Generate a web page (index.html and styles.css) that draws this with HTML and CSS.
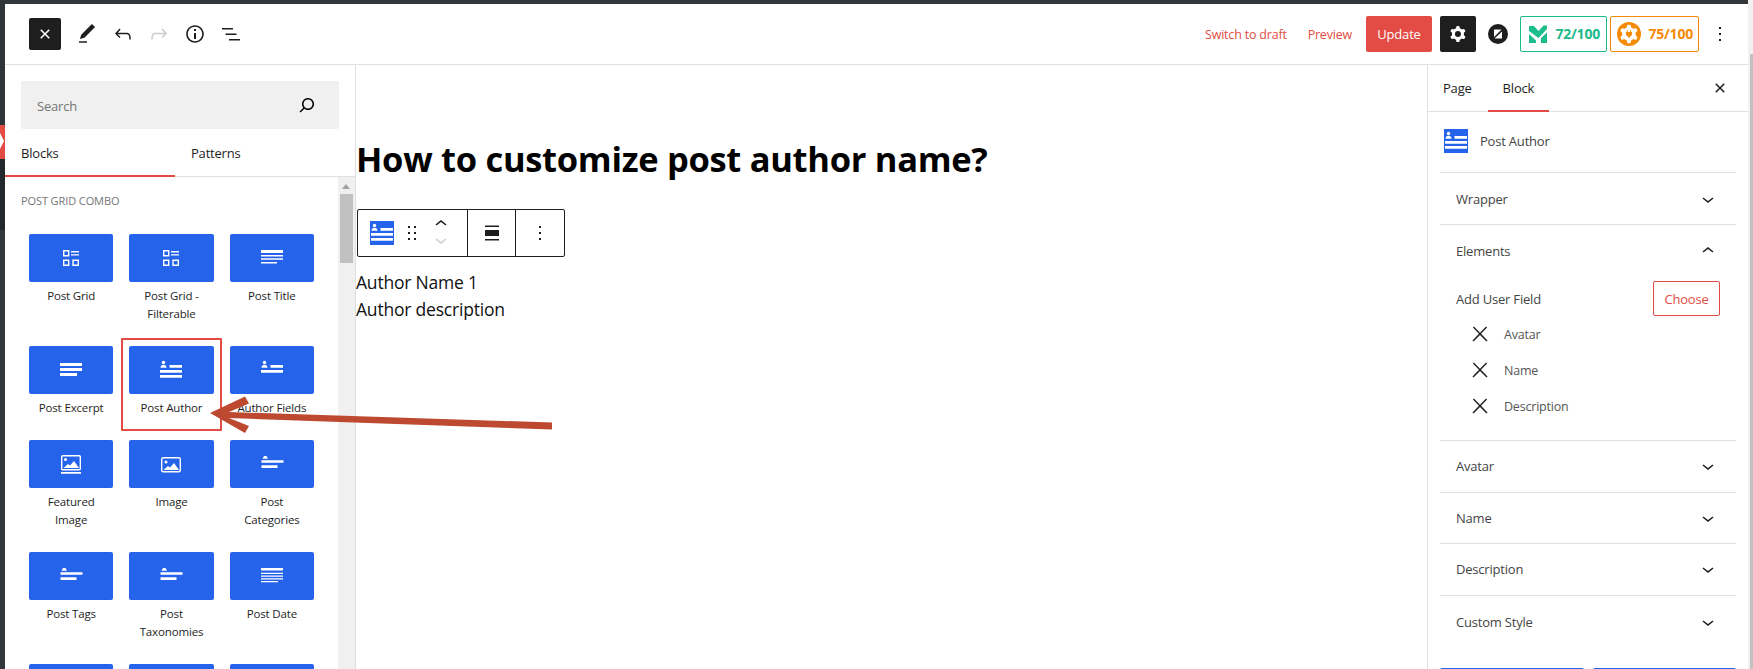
FILE: index.html
```html
<!DOCTYPE html>
<html lang="en">
<head>
    <meta charset="UTF-8">
    <title>How to customize post author name?</title>
    <link rel="stylesheet" href="styles.css">
</head>
<body>

    <svg class="defs" width="0" height="0">
        <symbol id="i-grid" viewBox="0 0 24 24">
            <path fill="none" stroke="#fff" stroke-width="1.4" d="M4.7 4.7h5v5h-5zM4.7 14.3h5v5h-5zM14 14.3h5.3v5H14z"/>
            <path fill="#fff" d="M12 5h8v1.4h-8zM12 8.2h8v1.4h-8z"/>
        </symbol>
        <symbol id="i-title" viewBox="0 0 24 24">
            <path fill="#fff" d="M1 4h22v3H1zM1 9h22v1.5H1zM1 12.3h22v1.5H1zM1 16h16v1.5H1z"/>
        </symbol>
        <symbol id="i-excerpt" viewBox="0 0 24 24">
            <path fill="#fff" d="M1 5h22v3H1zM1 10h22v3H1zM1 15h17v3H1z"/>
        </symbol>
        <symbol id="i-author" viewBox="0 0 24 24">
            <circle cx="4.5" cy="4.5" r="1.7" fill="#fff"/>
            <path fill="#fff" d="M1.5 9.7c0-2 1.2-3 3-3s3 1 3 3zM10.500 7H23v2.700H10.500zM1 12h22v2.700H1zM1 17h22v2.700H1z"/>
        </symbol>
        <symbol id="i-fields" viewBox="0 0 24 24">
            <circle cx="4.5" cy="4.5" r="1.7" fill="#fff"/>
            <path fill="#fff" d="M1.5 9.7c0-2 1.2-3 3-3s3 1 3 3zM10.500 7H23v2.700H10.500zM1 12h22v2.700H1z"/>
        </symbol>
        <symbol id="i-featured" viewBox="0 0 24 24">
            <rect x="2.7" y="3.7" width="18.6" height="14" rx="1" fill="none" stroke="#fff" stroke-width="1.4"/>
            <circle cx="6.5" cy="7.5" r="1.5" fill="#fff"/>
            <path fill="#fff" d="M4.500 16l4.500-4 2 1.400 4-4.400 5 7zM2 20h20v1.700H2z"/>
        </symbol>
        <symbol id="i-image" viewBox="0 0 24 24">
            <rect x="2.7" y="5.7" width="18.6" height="14" rx="1.500" fill="none" stroke="#fff" stroke-width="1.4"/>
            <circle cx="7" cy="10" r="1.5" fill="#fff"/>
            <path fill="#fff" d="M4.500 18l4.500-4 2 1.400 4-4.400 5 7z"/>
        </symbol>
        <symbol id="i-terms" viewBox="0 0 24 24">
            <path fill="#fff" d="M2.500 6.700L4 4h2.500L8 6.700zM1.500 8.300h22v2.400h-22zM1.500 13.300h16V16h-16z"/>
        </symbol>
        <symbol id="i-date" viewBox="0 0 24 24">
            <path fill="#fff" d="M1 4h22v2.600H1zM1 8.700h22V10H1zM1 11.400h22v1.300H1zM1 14.300h22v1.300H1zM1 17h17v1.300H1z"/>
        </symbol>
        <symbol id="i-cog" viewBox="0 0 24 24">
            <path fill-rule="evenodd" d="M10.289 4.836A1 1 0 0111.275 4h1.306a1 1 0 01.987.836l.244 1.466c.787.26 1.503.679 2.108 1.218l1.393-.522a1 1 0 011.216.437l.653 1.13a1 1 0 01-.23 1.273l-1.148.944a6.025 6.025 0 010 2.435l1.149.946a1 1 0 01.23 1.272l-.653 1.13a1 1 0 01-1.216.437l-1.394-.522c-.605.54-1.32.958-2.108 1.218l-.244 1.466a1 1 0 01-.987.836h-1.306a1 1 0 01-.986-.836l-.244-1.466a5.995 5.995 0 01-2.108-1.218l-1.394.522a1 1 0 01-1.217-.436l-.653-1.131a1 1 0 01.23-1.272l1.149-.946a6.026 6.026 0 010-2.435l-1.148-.944a1 1 0 01-.23-1.272l.653-1.131a1 1 0 011.217-.437l1.393.522a5.994 5.994 0 012.108-1.218l.244-1.466zM14.929 12a3 3 0 11-6 0 3 3 0 016 0z"/>
        </symbol>
        <symbol id="i-down" viewBox="0 0 24 24">
            <path d="M17.500 11.600L12 16l-5.500-4.400.9-1.200L12 14l4.500-3.600 1 1.200z"/>
        </symbol>
        <symbol id="i-up" viewBox="0 0 24 24">
            <path d="M6.500 12.400L12 8l5.500 4.400-.9 1.200L12 10l-4.500 3.600-1-1.200z"/>
        </symbol>
        <symbol id="i-x" viewBox="0 0 24 24">
            <path d="M13 11.800l6.100-6.300-1-1-6.100 6.200-6.100-6.200-1 1 6.100 6.300-6.500 6.700 1 1 6.500-6.600 6.500 6.600 1-1z"/>
        </symbol>
        <symbol id="i-close" viewBox="0 0 24 24">
            <path d="M12 13.060l3.712 3.713 1.061-1.060L13.061 12l3.712-3.712-1.060-1.060L12 10.938 8.288 7.227l-1.061 1.060L10.939 12l-3.712 3.712 1.060 1.061L12 13.061z"/>
        </symbol>
        <symbol id="i-more" viewBox="0 0 24 24">
            <path d="M13 19h-2v-2h2v2zm0-6h-2v-2h2v2zm0-6h-2V5h2v2z"/>
        </symbol>
    </svg>

    <div class="frame">
        <div class="admin-strip"><span class="menu-notch"></span></div>

        <div class="editor">
            <header class="topbar">
                <div class="tools">
                    <button class="close-btn"><svg width="24" height="24"><use href="#i-close"/></svg></button>
                    <svg class="tool" width="24" height="24" viewBox="0 0 24 24"><path d="M20.100 5.100L16.900 2 6.200 12.700l-1.300 4.400 4.500-1.300L20.100 5.100zM4 20.800h8v-1.500H4v1.500z"/></svg>
                    <svg class="tool" width="24" height="24" viewBox="0 0 24 24"><path d="M18.300 11.700c-.6-.6-1.400-.9-2.300-.9H6.700l2.900-3.300-1.100-1-4.500 5L8.500 16l1-1-2.700-2.700H16c.5 0 .9.2 1.300.5 1 1 1 3.400 1 4.500v.3h1.500v-.2c0-1.500 0-4.300-1.500-5.700z"/></svg>
                    <svg class="tool off" width="24" height="24" viewBox="0 0 24 24"><path d="M15.600 6.500l-1.100 1 2.900 3.300H8c-.9 0-1.700.3-2.300.9-1.400 1.500-1.400 4.200-1.400 5.600v.2h1.500v-.3c0-1.100 0-3.500 1-4.500.3-.3.7-.5 1.300-.5h9.200L14.500 15l1.100 1.100 4.600-4.600-4.600-5z"/></svg>
                    <svg class="tool" width="24" height="24" viewBox="0 0 24 24"><path d="M12 3.200c-4.800 0-8.800 3.900-8.800 8.800 0 4.800 3.900 8.800 8.800 8.800 4.800 0 8.800-3.900 8.800-8.800 0-4.800-4-8.800-8.800-8.800zm0 16c-4 0-7.200-3.300-7.200-7.200C4.800 8 8 4.800 12 4.800s7.200 3.300 7.200 7.200c0 4-3.200 7.200-7.200 7.200zM11 17h2v-6h-2v6zm0-8h2V7h-2v2z"/></svg>
                    <svg class="tool" width="24" height="24" viewBox="0 0 24 24"><path d="M3 6h11v1.500H3V6zm3.500 5.500h11V13h-11v-1.500zM21 17H10v1.500h11V17z"/></svg>
                </div>
                <div class="actions">
                    <a class="link">Switch to draft</a>
                    <a class="link preview">Preview</a>
                    <button class="update">Update</button>
                    <button class="gear"><svg width="24" height="24"><use href="#i-cog"/></svg></button>
                    <svg class="zlogo" width="20" height="20" viewBox="0 0 20 20">
                        <circle cx="10" cy="10" r="10" fill="#1e1e1e"/>
                        <path fill="#fff" d="M6 5.500h7.500L6 13zM14 7.500v7H6.500z"/>
                    </svg>
                    <div class="score green">
                        <svg width="18" height="18" viewBox="0 0 18 18"><path fill="#1cbc8c" d="M0 1h5l4.500 5 5-5.500H18V4l-8.500 9L0 6zM0 9l7 6.500V18H0zM12 13l6-5.500V18h-6z"/></svg>
                        <span>72/100</span>
                    </div>
                    <div class="score orange">
                        <svg width="24" height="24" viewBox="0 0 24 24">
                            <circle cx="12" cy="12" r="12" fill="#f58a07"/>
                            <svg x="0" y="0" width="24" height="24" viewBox="1.500 1.500 21 21" fill="#fff"><use href="#i-cog" width="24" height="24"/></svg>
                            <circle cx="12" cy="12" r="5" fill="#fff"/>
                            <path fill="#f58a07" d="M9.800 8.300h1v1.800h2.400V8.300h1v1.800h.8v2c0 1.400-1 2.400-2.400 2.600V16h-1.200v-1.300c-1.400-.2-2.400-1.200-2.400-2.600v-2h.8z"/>
                        </svg>
                        <span>75/100</span>
                    </div>
                    <svg class="kebab" width="24" height="24"><use href="#i-more"/></svg>
                </div>
            </header>

            <div class="workspace">
                <aside class="inserter">
                    <div class="search-wrap">
                        <div class="search">
                            <span>Search</span>
                            <svg width="24" height="24" viewBox="0 0 24 24"><path d="M13 5c-3.300 0-6 2.700-6 6 0 1.400.5 2.700 1.300 3.700l-3.800 3.800 1.100 1.100 3.800-3.800c1 .8 2.300 1.300 3.700 1.300 3.300 0 6-2.700 6-6S16.300 5 13 5zm0 10.500c-2.500 0-4.500-2-4.500-4.500s2-4.500 4.500-4.500 4.500 2 4.500 4.500-2 4.500-4.500 4.500z"/></svg>
                        </div>
                    </div>
                    <div class="ins-tabs">
                        <div class="ins-tab active">Blocks</div>
                        <div class="ins-tab">Patterns</div>
                    </div>
                    <div class="ins-body">
                        <div class="ins-list">
                            <h2 class="ins-title">POST GRID COMBO</h2>
                            <div class="blocks">
                                <div class="block"><div class="tile"><svg width="24" height="24"><use href="#i-grid"/></svg></div><p>Post Grid</p></div>
                                <div class="block"><div class="tile"><svg width="24" height="24"><use href="#i-grid"/></svg></div><p>Post Grid - Filterable</p></div>
                                <div class="block"><div class="tile"><svg width="24" height="24"><use href="#i-title"/></svg></div><p>Post Title</p></div>
                                <div class="block"><div class="tile"><svg width="24" height="24"><use href="#i-excerpt"/></svg></div><p>Post Excerpt</p></div>
                                <div class="block"><div class="tile"><svg width="24" height="24"><use href="#i-author"/></svg></div><p>Post Author</p><span class="highlight"></span></div>
                                <div class="block"><div class="tile"><svg width="24" height="24"><use href="#i-fields"/></svg></div><p>Author Fields</p></div>
                                <div class="block"><div class="tile"><svg width="24" height="24"><use href="#i-featured"/></svg></div><p>Featured Image</p></div>
                                <div class="block"><div class="tile"><svg width="24" height="24"><use href="#i-image"/></svg></div><p>Image</p></div>
                                <div class="block"><div class="tile"><svg width="24" height="24"><use href="#i-terms"/></svg></div><p>Post Categories</p></div>
                                <div class="block"><div class="tile"><svg width="24" height="24"><use href="#i-terms"/></svg></div><p>Post Tags</p></div>
                                <div class="block"><div class="tile"><svg width="24" height="24"><use href="#i-terms"/></svg></div><p>Post Taxonomies</p></div>
                                <div class="block"><div class="tile"><svg width="24" height="24"><use href="#i-date"/></svg></div><p>Post Date</p></div>
                                <div class="block"><div class="tile"></div></div>
                                <div class="block"><div class="tile"></div></div>
                                <div class="block"><div class="tile"></div></div>
                            </div>
                        </div>
                        <div class="scrollbar">
                            <span class="scroll-up"></span>
                            <span class="scroll-thumb"></span>
                        </div>
                    </div>
                </aside>

                <main class="canvas">
                    <h1>How to customize post author name?</h1>
                    <div class="block-toolbar">
                        <div class="tb-group first">
                            <svg width="24" height="24" viewBox="0 0 24 24">
                                <rect width="24" height="24" fill="#2563eb"/>
                                <use href="#i-author"/>
                            </svg>
                            <svg class="drag" width="24" height="24" viewBox="0 0 24 24"><path d="M8 7h2V5H8v2zm0 6h2v-2H8v2zm0 6h2v-2H8v2zm6-14v2h2V5h-2zm0 8h2v-2h-2v2zm0 6h2v-2h-2v2z"/></svg>
                            <div class="movers">
                                <svg width="24" height="16" viewBox="0 4 24 16"><use href="#i-up" width="24" height="24"/></svg>
                                <svg class="off" width="24" height="16" viewBox="0 4 24 16"><use href="#i-down" width="24" height="24"/></svg>
                            </div>
                        </div>
                        <div class="tb-group align">
                            <svg width="24" height="24" viewBox="0 0 24 24"><path d="M5 4.500h14V6H5zM5 18h14v1.500H5zM5 9h14v6H5z"/></svg>
                        </div>
                        <div class="tb-group last">
                            <svg width="24" height="24"><use href="#i-more"/></svg>
                        </div>
                    </div>
                    <div class="author-name">Author Name 1</div>
                    <div class="author-desc">Author description</div>
                </main>

                <aside class="sidebar">
                    <div class="side-tabs">
                        <div class="side-tab page">Page</div>
                        <div class="side-tab active">Block</div>
                        <svg class="side-close" width="24" height="24"><use href="#i-close"/></svg>
                    </div>
                    <div class="side-body">
                        <div class="block-card">
                            <svg width="24" height="24" viewBox="0 0 24 24">
                                <rect width="24" height="24" fill="#2563eb"/>
                                <use href="#i-author"/>
                            </svg>
                            <span>Post Author</span>
                        </div>
                        <div class="panel wrapper"><span>Wrapper</span><svg width="24" height="24"><use href="#i-down"/></svg></div>
                        <div class="panel-open">
                            <div class="panel head"><span>Elements</span><svg width="24" height="24"><use href="#i-up"/></svg></div>
                            <div class="field-row">
                                <span>Add User Field</span>
                                <button class="choose">Choose</button>
                            </div>
                            <div class="el-item"><svg width="24" height="24"><use href="#i-x"/></svg><span>Avatar</span></div>
                            <div class="el-item"><svg width="24" height="24"><use href="#i-x"/></svg><span>Name</span></div>
                            <div class="el-item"><svg width="24" height="24"><use href="#i-x"/></svg><span>Description</span></div>
                        </div>
                        <div class="panel"><span>Avatar</span><svg width="24" height="24"><use href="#i-down"/></svg></div>
                        <div class="panel short"><span>Name</span><svg width="24" height="24"><use href="#i-down"/></svg></div>
                        <div class="panel"><span>Description</span><svg width="24" height="24"><use href="#i-down"/></svg></div>
                        <div class="panel last-panel"><span>Custom Style</span><svg width="24" height="24"><use href="#i-down"/></svg></div>
                        <div class="side-buttons"><span></span><span></span></div>
                    </div>
                </aside>
            </div>
        </div>

        <div class="page-scroll"><span class="page-thumb"></span></div>
    </div>

    <!-- flecha de la captura -->
    <svg class="arrow" width="360" height="42" viewBox="0 0 360 42">
        <path fill="#bd4a30" d="M3 19L38 2.500l4 7L22 18l323 10.500v7L22 24l20 8-4 7z"/>
    </svg>

</body>
</html>
```

FILE: styles.css
```css
* {
    box-sizing: border-box;
}
html, body {
    margin: 0;
    height: 100%;
    overflow: hidden;
}
body {
    font-family: "Open Sans", Arial, sans-serif;
    font-size: 13px;
    color: #1e1e1e;
    background: #fff;
    position: relative;
}
.defs {
    position: absolute;
}
button {
    font-family: inherit;
    border: none;
    cursor: pointer;
}
svg {
    display: block;
    flex: none;
}

.frame {
    display: flex;
    height: 669px;
    overflow: hidden;
}
.admin-strip {
    width: 5px;
    position: relative;
    background: linear-gradient(#32373c 4px, #2f3439 4px, #2f3439 125px, #23282d 125px, #23282d 230px, #32373c 230px);
}
.menu-notch {
    position: absolute;
    left: 0;
    top: 125px;
    width: 5px;
    height: 34px;
    background: #e24c44;
}
.menu-notch::after {
    content: "";
    position: absolute;
    left: 0;
    top: 8px;
    border: 8.5px solid transparent;
    border-left: 4px solid #fff;
    border-right: 0;
}
.editor {
    flex: 1;
    min-width: 0;
    display: flex;
    flex-direction: column;
    border-top: 4px solid #32373c;
}
.page-scroll {
    flex: none;
    width: 5px;
    background: #f1f1f1;
    padding: 54px 0 0 2px;
}
.page-thumb {
    display: block;
    height: 100%;
    background: #c1c1c1;
}

/* barra superior */
.topbar {
    height: 61px;
    flex: none;
    display: flex;
    align-items: center;
    justify-content: space-between;
    border-bottom: 1px solid #e0e0e0;
    padding: 0 0 1px 24px;
}
.tools {
    display: flex;
    align-items: center;
}
.close-btn {
    width: 32px;
    height: 32px;
    padding: 4px;
    border-radius: 2px;
    background: #1e1e1e;
    fill: #fff;
    margin-right: 14px;
}
.tool {
    margin-right: 12px;
    fill: #1e1e1e;
}
.tool.off {
    fill: #ccc;
}
.actions {
    display: flex;
    align-items: center;
    padding-right: 16px;
}
.link {
    color: #e24c44;
    font-size: 12.5px;
    letter-spacing: -.2px;
    margin: 2px 21px 0 0;
}
.link.preview {
    margin-right: 14px;
}
.update {
    width: 66px;
    height: 36px;
    background: #e24c44;
    color: #fff;
    font-size: 13px;
    font-weight: 500;
    border-radius: 2px;
    margin-right: 8px;
    letter-spacing: -.2px;
}
.gear {
    width: 36px;
    height: 36px;
    padding: 6px;
    background: #1e1e1e;
    border-radius: 2px;
    margin-right: 12px;
    fill: #fff;
}
.zlogo {
    margin-right: 12px;
}
.score {
    display: flex;
    align-items: center;
    justify-content: space-between;
    height: 36px;
    border: 1px solid;
    border-radius: 2px;
    font-size: 14px;
    font-weight: 700;
    letter-spacing: -.2px;
}
.score.green {
    width: 87px;
    padding: 0 6px 0 8px;
    margin-right: 3px;
    border-color: #1cbc8c;
    color: #1cb98a;
}
.score.orange {
    width: 89px;
    padding: 0 5px 0 6px;
    border-color: #f58a07;
    color: #f58a07;
}
.kebab {
    margin-left: 9px;
    fill: #1e1e1e;
}

.workspace {
    flex: 1;
    min-height: 0;
    display: flex;
    overflow: hidden;
}

/* panel de bloques */
.inserter {
    width: 351px;
    flex: none;
    display: flex;
    flex-direction: column;
    border-right: 1px solid #e0e0e0;
}
.search-wrap {
    padding: 16px 16px 0;
}
.search {
    height: 48px;
    background: #f0f0f0;
    border-radius: 2px;
    display: flex;
    align-items: center;
    justify-content: space-between;
    padding: 0 20px 0 16px;
    color: #757575;
    letter-spacing: -.2px;
}
.search span {
    margin-top: 2px;
}
.ins-tabs {
    display: flex;
    height: 48px;
    border-bottom: 1px solid #e0e0e0;
}
.ins-tab {
    width: 170px;
    padding: 15px 16px 0;
    font-weight: 500;
    letter-spacing: -.2px;
}
.ins-tab.active {
    height: 48px;
    border-bottom: 2px solid #e24c44;
}
.ins-body {
    flex: 1;
    min-height: 0;
    display: flex;
}
.ins-list {
    flex: 1;
    min-width: 0;
    overflow: hidden;
    padding: 0 24px;
}
.ins-title {
    margin: 16px 0 25px -8px;
    font-size: 11px;
    font-weight: 500;
    line-height: 16px;
    color: #757575;
    letter-spacing: -.1px;
}
.blocks {
    display: grid;
    grid-template-columns: repeat(3, 1fr);
    column-gap: 16px;
    align-items: start;
}
.block {
    position: relative;
    padding-bottom: 23px;
}
.tile {
    height: 48px;
    background: #2563eb;
    border-radius: 2px;
    display: flex;
    align-items: center;
    justify-content: center;
}
.block p {
    margin: 5px 0 0;
    padding: 0 5px;
    font-size: 11.5px;
    line-height: 18px;
    text-align: center;
    letter-spacing: -.15px;
}
.highlight {
    position: absolute;
    left: -8px;
    right: -8px;
    top: -8px;
    height: 93px;
    border: 2px solid #e24c44;
    border-radius: 1px;
}
.scrollbar {
    width: 17px;
    flex: none;
    background: #f0f0f0;
    position: relative;
}
.scroll-up {
    position: absolute;
    left: 4px;
    top: 7px;
    border: 4.5px solid transparent;
    border-top: 0;
    border-bottom: 5px solid #a3a3a3;
}
.scroll-thumb {
    position: absolute;
    left: 2px;
    right: 2px;
    top: 17px;
    height: 69px;
    background: #c1c1c1;
}

/* contenido */
.canvas {
    flex: 1;
    min-width: 0;
    padding-top: 70px;
}
.canvas h1 {
    margin: 0;
    font-size: 34.5px;
    line-height: 48px;
    font-weight: 700;
    color: #000;
    letter-spacing: -.3px;
}
.block-toolbar {
    display: flex;
    width: 208px;
    height: 48px;
    margin: 26px 0 0 1px;
    border: 1px solid #1e1e1e;
    border-radius: 2px;
}
.tb-group {
    display: flex;
    align-items: center;
    justify-content: center;
    fill: #1e1e1e;
}
.tb-group.first {
    width: 110px;
    justify-content: flex-start;
    padding-left: 12px;
    border-right: 1px solid #1e1e1e;
}
.tb-group.align {
    width: 48px;
    border-right: 1px solid #1e1e1e;
}
.tb-group.last {
    flex: 1;
}
.drag {
    margin-left: 6px;
}
.movers {
    margin-left: 5px;
    padding-bottom: 2px;
}
.movers .off {
    fill: #ccc;
}
.author-name, .author-desc {
    font-size: 17.5px;
    line-height: 27px;
    color: #111;
    letter-spacing: -.2px;
}
.author-name {
    margin-top: 12px;
}

/* barra lateral */
.sidebar {
    width: 321px;
    flex: none;
    overflow: hidden;
    border-left: 1px solid #e0e0e0;
}
.side-tabs {
    display: flex;
    height: 47px;
    border-bottom: 1px solid #e0e0e0;
    position: relative;
}
.side-tab {
    padding: 14px 14px 0 14px;
    font-weight: 500;
    letter-spacing: -.2px;
}
.side-tab.page {
    padding-left: 15px;
}
.side-tab.active {
    height: 47px;
    margin-left: 2px;
    width: 61px;
    padding-left: 15px;
    border-bottom: 2px solid #e24c44;
}
.side-close {
    position: absolute;
    right: 16px;
    top: 11px;
    fill: #1e1e1e;
}
.side-body {
    padding: 0 12px;
    color: #444;
}
.block-card {
    height: 61px;
    display: flex;
    align-items: center;
    gap: 12px;
    padding: 0 4px 3px;
    border-bottom: 1px solid #e0e0e0;
    letter-spacing: -.2px;
}
.panel {
    height: 52px;
    display: flex;
    align-items: center;
    justify-content: space-between;
    padding: 0 16px 1px;
    border-bottom: 1px solid #e0e0e0;
    font-weight: 500;
    letter-spacing: -.2px;
}
.panel.wrapper {
    padding-bottom: 0;
}
.panel.short {
    height: 51px;
}
.panel svg {
    fill: #1e1e1e;
}
.panel-open {
    height: 216px;
    border-bottom: 1px solid #e0e0e0;
}
.panel.head {
    border-bottom: none;
}
.panel.last-panel {
    border-bottom: none;
}
.field-row {
    display: flex;
    align-items: center;
    justify-content: space-between;
    padding: 0 16px;
    margin-top: 4px;
    letter-spacing: -.2px;
}
.choose {
    width: 67px;
    height: 35px;
    background: #fff;
    border: 1px solid #e24c44;
    border-radius: 2px;
    color: #e24c44;
    font-size: 13px;
    letter-spacing: -.2px;
}
.el-item {
    height: 36px;
    display: flex;
    align-items: center;
    gap: 12px;
    padding-left: 28px;
    fill: #1e1e1e;
    color: #555;
    font-size: 12.5px;
    letter-spacing: -.2px;
}
.side-buttons {
    display: flex;
    gap: 9px;
    margin-top: 20px;
}
.side-buttons span {
    flex: 1;
    height: 2px;
    background: #2563eb;
    border-radius: 3px 3px 0 0;
}

/* encima de todo */
.arrow {
    position: absolute;
    left: 207px;
    top: 394px;
}
```
